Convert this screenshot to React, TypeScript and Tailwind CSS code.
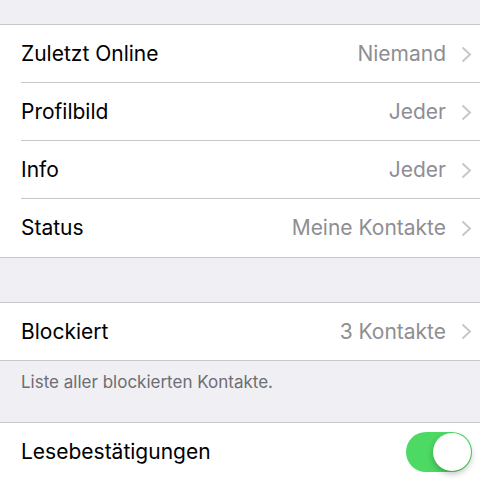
const Chevron = () => (
  <svg width="11" height="17" viewBox="0 0 11 17" className="ml-[15px] shrink-0">
    <path d="M1.5 1.5 L9 8.5 L1.5 15.5" fill="none" stroke="#c7c7cc" strokeWidth="2" />
  </svg>
);

type RowProps = { label: string; value?: string; last?: boolean; h?: string; children?: React.ReactNode };

const Row = ({ label, value, last, h = "h-[58px]", children }: RowProps) => (
  <div className={`relative flex ${h} items-center pl-[21px] pr-[8px] bg-white`}>
    <span className="flex-1 text-[21px] text-black">{label}</span>
    {value !== undefined && (
      <>
        <span className="text-[21px] text-[#8e8e93]">{value}</span>
        <Chevron />
      </>
    )}
    {children}
    {!last && <div className="absolute bottom-0 left-[21px] right-0 h-px bg-[#c8c7cc]" />}
  </div>
);

const Toggle = () => (
  <div className="relative h-[40px] w-[66px] rounded-full bg-[#4cd964]">
    <div className="absolute right-[1px] top-[1px] h-[38px] w-[38px] rounded-full bg-white shadow-[0_3px_6px_rgba(0,0,0,0.25)]" />
  </div>
);

export default function App() {
  return (
    <div className="h-[480px] w-[480px] overflow-hidden bg-[#efeff4]" style={{ fontFamily: "Inter, 'Liberation Sans', sans-serif" }}>
      <div className="h-[24px]" />
      <div className="border-y border-[#c8c7cc]">
        <Row label="Zuletzt Online" value="Niemand" />
        <Row label="Profilbild" value="Jeder" />
        <Row label="Info" value="Jeder" />
        <Row label="Status" value="Meine Kontakte" last />
      </div>
      <div className="h-[44px]" />
      <div className="border-y border-[#c8c7cc]">
        <Row label="Blockiert" value="3 Kontakte" h="h-[57px]" last />
      </div>
      <div className="h-[61px] pl-[21px] pt-[9px] text-[17px] text-[#6d6d72]">Liste aller blockierten Kontakte.</div>
      <div className="border-t border-[#c8c7cc]">
        <Row label="Lesebestätigungen" last>
          <Toggle />
        </Row>
      </div>
    </div>
  );
}
